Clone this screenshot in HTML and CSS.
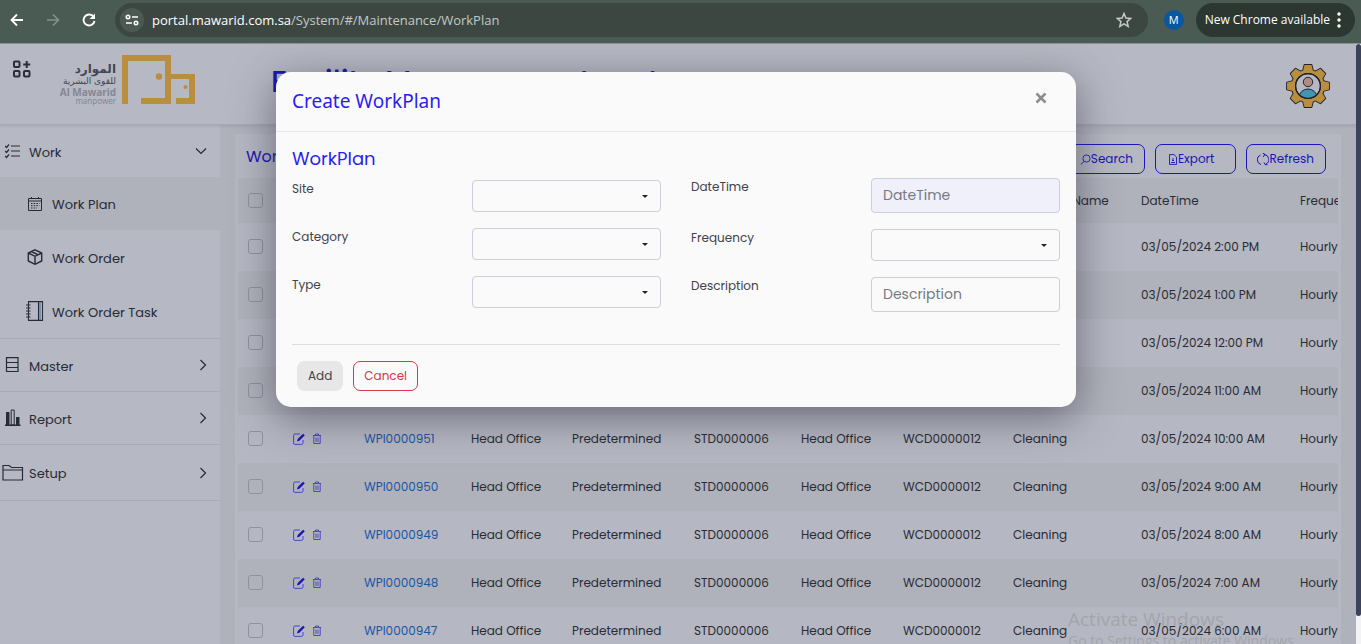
FILE: index.html
```html
<!DOCTYPE html>
<html lang="en">
<head>
<meta charset="utf-8">
<title>WorkPlan</title>
<link rel="stylesheet" href="styles.css">
</head>
<body>
<svg class="sprite" aria-hidden="true">
  <symbol id="edit" viewBox="0 0 12 12"><path d="M7 1H2Q.6 1 .6 2.400V10Q.6 11.400 2 11.400H8.500Q10 11.400 10 10V7" fill="none" stroke="currentColor"/><path d="M4 8.500 4.700 6 10 .7 11.800 2.300 6.400 7.700Z" fill="#1a15b8"/></symbol>
  <symbol id="trash" viewBox="0 0 12 12"><path d="M2 2.500H10M4.500 2.500V1H7.500V2.500M2.800 2.500V10.500H9.200V2.500M5 4.500V9M7 4.500V9" fill="none" stroke="currentColor"/></symbol>
  <symbol id="right" viewBox="0 0 12 12"><path d="M3.500 1 8.500 6 3.500 11" fill="none" stroke="currentColor" stroke-width="1.200"/></symbol>
</svg>

<div class="browser">
  <button class="nav" aria-label="Back"><svg width="14" height="14" viewBox="0 0 14 14"><path d="M13 7H2M7 1.500 1.500 7 7 12.500" fill="none" stroke="#fff" stroke-width="1.800"/></svg></button>
  <button class="nav" aria-label="Forward"><svg width="14" height="14" viewBox="0 0 14 14"><path d="M1 7H12M7 1.500 12.500 7 7 12.500" fill="none" stroke="#87918c" stroke-width="1.600"/></svg></button>
  <button class="nav" aria-label="Reload"><svg width="14" height="14" viewBox="0 0 14 14"><path d="M11.700 4A5.500 5.500 0 1 0 12.500 8" fill="none" stroke="#fff" stroke-width="1.900"/><path d="M13 .5V6H7.500Z" fill="#fff"/></svg></button>
  <div class="omnibox">
    <button class="site-info" aria-label="Site information"><svg width="14" height="12" viewBox="0 0 14 12"><g fill="none" stroke="#fff" stroke-width="1.600"><circle cx="3" cy="3" r="1.700"/><path d="M7 3H13M1 9H7"/><circle cx="11" cy="9" r="1.700"/></g></svg></button>
    <span class="url"><b>portal.mawarid.com.sa</b>/System/#/Maintenance/WorkPlan</span>
    <button class="star" aria-label="Bookmark"><svg width="16" height="16" viewBox="0 0 16 16"><path d="M8 1.500 9.900 6 14.800 6.400 11.100 9.600 12.200 14.400 8 11.800 3.800 14.400 4.900 9.600 1.200 6.400 6.100 6Z" fill="none" stroke="#c5cac7" stroke-width="1.500"/></svg></button>
  </div>
  <button class="profile">M</button>
  <button class="update"><span>New Chrome available</span><svg width="4" height="16" viewBox="0 0 4 16" fill="#fff"><circle cx="2" cy="2" r="1.700"/><circle cx="2" cy="8" r="1.700"/><circle cx="2" cy="14" r="1.700"/></svg></button>
</div>

<div class="viewport">
  <header class="header">
    <button class="apps" aria-label="Apps"><svg width="18" height="18" viewBox="0 0 18 18"><g fill="none" stroke="#2b2d39" stroke-width="2"><rect x="1" y="1.500" width="5.500" height="5.500" rx="1"/><rect x="1" y="11" width="5.500" height="5.500" rx="1"/><rect x="11" y="11" width="5.500" height="5.500" rx="1"/><path d="M13.700 1V8M10.200 4.500H17.200"/></g></svg></button>
    <div class="logo">
      <div class="logo-text">
        <span class="ar-big" lang="ar" dir="rtl">الموارد</span>
        <span class="ar-small" lang="ar" dir="rtl">للقوى البشرية</span>
        <span class="en-big">Al Mawarid</span>
        <span class="en-small">manpower</span>
      </div>
      <svg width="73" height="49" viewBox="0 0 73 49" fill="#b98e3e"><path d="M0 0H49V19H73V49H54V43H67V24H49V49H19V43H43V6H6V49H0Z"/><circle cx="37" cy="21.500" r="3.200"/><circle cx="63.500" cy="32" r="2"/></svg>
    </div>
    <h1>Facility Management system</h1>
    <button class="account" aria-label="Account"><svg width="44" height="44" viewBox="-22 -22 44 44">
      <defs><path id="tooth" d="M-5-15 -3.500-21H3.500L5-15Z"/><g id="teeth"><use href="#tooth"/><use href="#tooth" transform="rotate(45)"/><use href="#tooth" transform="rotate(90)"/><use href="#tooth" transform="rotate(135)"/><use href="#tooth" transform="rotate(180)"/><use href="#tooth" transform="rotate(225)"/><use href="#tooth" transform="rotate(270)"/><use href="#tooth" transform="rotate(315)"/><circle r="16.200"/></g><clipPath id="face"><circle r="12"/></clipPath></defs>
      <use href="#teeth" fill="#20222d" stroke="#20222d" stroke-width="1.800" stroke-linejoin="round"/><use href="#teeth" fill="#b98f3d"/>
      <circle r="12.400" fill="#b6b9c3" stroke="#20222d" stroke-width="1.200"/>
      <g clip-path="url(#face)"><ellipse cy="11.500" rx="9" ry="8.500" fill="#4395b4" stroke="#20222d"/></g><circle r="12.400" fill="none" stroke="#20222d" stroke-width="1.200"/>
      <circle cy="-4" r="4.700" fill="#b18c82" stroke="#20222d"/></svg></button>
  </header>

  <div class="layout">
    <nav class="sidebar">
      <a class="item top first" href="#"><svg width="16" height="16" viewBox="0 0 16 16"><path d="M6 3H15M6 8H15M6 13H15M0 3 1.500 4.500 4 1.500M0 8 1.500 9.500 4 6.500M0 13 1.500 14.500 4 11.500" fill="none" stroke="currentColor" stroke-width="1.200"/></svg><span>Work</span><svg class="chev down" width="12" height="12"><use href="#right"/></svg></a>
      <a class="item sub active" href="#"><svg width="16" height="16" viewBox="0 0 16 16"><g fill="none" stroke="currentColor"><path d="M1.500 2.500H14.500V14.500H1.500ZM1.500 5H14.500M4.500 1V3M11.500 1V3"/><path d="M4 7.500H12.500M4 9.700H12.500M4 12H10" stroke-dasharray="1.500 1.200"/></g></svg><span>Work Plan</span></a>
      <a class="item sub" href="#"><svg width="16" height="16" viewBox="0 0 16 16"><path d="M8 .8 14.700 4V12L8 15.300 1.300 12V4ZM1.300 4 8 7.300 14.700 4M8 7.300V15.300M4.500 2.500 11.200 5.800" fill="none" stroke="currentColor" stroke-width="1.400"/></svg><span>Work Order</span></a>
      <a class="item sub" href="#"><svg class="book" width="18" height="20" viewBox="0 0 18 20"><path d="M2.500.6H16.500V19.400H2.500ZM12.500.6V19.400M0 4H4.500M0 7H4.500M0 10H4.500M0 13H4.500M0 16H4.500" fill="none" stroke="currentColor" stroke-width="1.100"/><path d="M14 1V19" stroke="#3f6f9e"/></svg><span>Work Order Task</span></a>
      <a class="item top ruled" href="#"><svg width="16" height="16" viewBox="0 0 16 16"><path d="M1.500 .6H13V14.500H1.500ZM1.500 5.500H13M1.500 10.500H13" fill="none" stroke="currentColor" stroke-width="1.200"/></svg><span>Master</span><svg class="chev" width="12" height="12"><use href="#right"/></svg></a>
      <a class="item top ruled" href="#"><svg width="16" height="18" viewBox="0 0 16 18"><path d="M1 3H4.500V16H1ZM11 8H14.500V16H11ZM0 15.500H15.500V17H0Z" fill="currentColor"/><path d="M6.200 1H9.200V16H6.200Z" fill="none" stroke="currentColor"/></svg><span>Report</span><svg class="chev" width="12" height="12"><use href="#right"/></svg></a>
      <a class="item top ruled last" href="#"><svg class="folder" width="22" height="18" viewBox="0 0 22 18"><path d="M1 16V1.500H7L9.500 3.500H20.500V16ZM1 6H20.500" fill="none" stroke="currentColor" stroke-width="1.200"/></svg><span>Setup</span><svg class="chev" width="12" height="12"><use href="#right"/></svg></a>
    </nav>

    <main class="panel">
      <div class="toolbar">
        <h2>WorkPlan</h2>
        <button><svg width="11" height="11" viewBox="0 0 11 11"><g fill="none" stroke="currentColor" stroke-width=".9"><circle cx="6.500" cy="4.500" r="3.600"/><path d="M4 7.500 .8 10.500"/></g></svg>Search</button>
        <button class="export"><svg width="10" height="11" viewBox="0 0 10 11"><path d="M1.500.6H6L8.500 3V10.400H1.500ZM3 8.500H7M4 6.500H6M5 4V6" fill="none" stroke="currentColor" stroke-width=".9"/></svg>Export</button>
        <button><svg width="12" height="13" viewBox="0 0 12 13"><path d="M4 11.500A5 5 0 0 1 3.500 2M7 1.500A5 5 0 0 1 9 11M5.500 0 8 1.500 6 4M7 9.500 8 11.500 10.500 11.800" fill="none" stroke="currentColor"/></svg>Refresh</button>
      </div>
      <div class="table-wrap">
        <table>
          <colgroup><col class="c-check"><col class="c-act"><col class="c-id"><col class="c-site"><col class="c-type"><col class="c-code"><col class="c-loc"><col class="c-cat"><col class="c-name"><col class="c-date"><col class="c-freq"></colgroup>
          <thead><tr><th><input type="checkbox" aria-label="Select all"></th><th></th><th>WorkPlan</th><th>Site</th><th>Type</th><th>Site Code</th><th>Site Name</th><th>Category</th><th>Category Name</th><th>DateTime</th><th>Frequency</th></tr></thead>
          <tbody>
            <tr><td><input type="checkbox" aria-label="Select WPI0000955"></td><td class="act"><button aria-label="Edit"><svg><use href="#edit"/></svg></button><button aria-label="Delete"><svg><use href="#trash"/></svg></button></td><td><a href="#">WPI0000955</a></td><td>Head Office</td><td>Predetermined</td><td>STD0000006</td><td>Head Office</td><td>WCD0000012</td><td>Cleaning</td><td>03/05/2024 2:00 PM</td><td>Hourly</td></tr>
            <tr><td><input type="checkbox" aria-label="Select WPI0000954"></td><td class="act"><button aria-label="Edit"><svg><use href="#edit"/></svg></button><button aria-label="Delete"><svg><use href="#trash"/></svg></button></td><td><a href="#">WPI0000954</a></td><td>Head Office</td><td>Predetermined</td><td>STD0000006</td><td>Head Office</td><td>WCD0000012</td><td>Cleaning</td><td>03/05/2024 1:00 PM</td><td>Hourly</td></tr>
            <tr><td><input type="checkbox" aria-label="Select WPI0000953"></td><td class="act"><button aria-label="Edit"><svg><use href="#edit"/></svg></button><button aria-label="Delete"><svg><use href="#trash"/></svg></button></td><td><a href="#">WPI0000953</a></td><td>Head Office</td><td>Predetermined</td><td>STD0000006</td><td>Head Office</td><td>WCD0000012</td><td>Cleaning</td><td>03/05/2024 12:00 PM</td><td>Hourly</td></tr>
            <tr><td><input type="checkbox" aria-label="Select WPI0000952"></td><td class="act"><button aria-label="Edit"><svg><use href="#edit"/></svg></button><button aria-label="Delete"><svg><use href="#trash"/></svg></button></td><td><a href="#">WPI0000952</a></td><td>Head Office</td><td>Predetermined</td><td>STD0000006</td><td>Head Office</td><td>WCD0000012</td><td>Cleaning</td><td>03/05/2024 11:00 AM</td><td>Hourly</td></tr>
            <tr><td><input type="checkbox" aria-label="Select WPI0000951"></td><td class="act"><button aria-label="Edit"><svg><use href="#edit"/></svg></button><button aria-label="Delete"><svg><use href="#trash"/></svg></button></td><td><a href="#">WPI0000951</a></td><td>Head Office</td><td>Predetermined</td><td>STD0000006</td><td>Head Office</td><td>WCD0000012</td><td>Cleaning</td><td>03/05/2024 10:00 AM</td><td>Hourly</td></tr>
            <tr><td><input type="checkbox" aria-label="Select WPI0000950"></td><td class="act"><button aria-label="Edit"><svg><use href="#edit"/></svg></button><button aria-label="Delete"><svg><use href="#trash"/></svg></button></td><td><a href="#">WPI0000950</a></td><td>Head Office</td><td>Predetermined</td><td>STD0000006</td><td>Head Office</td><td>WCD0000012</td><td>Cleaning</td><td>03/05/2024 9:00 AM</td><td>Hourly</td></tr>
            <tr><td><input type="checkbox" aria-label="Select WPI0000949"></td><td class="act"><button aria-label="Edit"><svg><use href="#edit"/></svg></button><button aria-label="Delete"><svg><use href="#trash"/></svg></button></td><td><a href="#">WPI0000949</a></td><td>Head Office</td><td>Predetermined</td><td>STD0000006</td><td>Head Office</td><td>WCD0000012</td><td>Cleaning</td><td>03/05/2024 8:00 AM</td><td>Hourly</td></tr>
            <tr><td><input type="checkbox" aria-label="Select WPI0000948"></td><td class="act"><button aria-label="Edit"><svg><use href="#edit"/></svg></button><button aria-label="Delete"><svg><use href="#trash"/></svg></button></td><td><a href="#">WPI0000948</a></td><td>Head Office</td><td>Predetermined</td><td>STD0000006</td><td>Head Office</td><td>WCD0000012</td><td>Cleaning</td><td>03/05/2024 7:00 AM</td><td>Hourly</td></tr>
            <tr><td><input type="checkbox" aria-label="Select WPI0000947"></td><td class="act"><button aria-label="Edit"><svg><use href="#edit"/></svg></button><button aria-label="Delete"><svg><use href="#trash"/></svg></button></td><td><a href="#">WPI0000947</a></td><td>Head Office</td><td>Predetermined</td><td>STD0000006</td><td>Head Office</td><td>WCD0000012</td><td>Cleaning</td><td>03/05/2024 6:00 AM</td><td>Hourly</td></tr>
          </tbody>
        </table>
      </div>
    </main>
  </div>

  <div class="scrollbar"><div class="thumb"></div></div>

  <div class="overlay">
    <section class="modal" role="dialog" aria-labelledby="modal-title">
      <div class="modal-head">
        <h2 id="modal-title">Create WorkPlan</h2>
        <button class="close" aria-label="Close"><svg width="12" height="12" viewBox="0 0 12 12"><path d="M1.500 1.500 10.500 10.500M10.500 1.500 1.500 10.500" stroke="#8c8c8c" stroke-width="2.500"/></svg></button>
      </div>
      <form class="modal-body">
        <h3>WorkPlan</h3>
        <div class="fields">
          <div class="column first">
            <div class="field"><label for="site">Site</label><div class="select"><select id="site"><option></option></select></div></div>
            <div class="field"><label for="category">Category</label><div class="select"><select id="category"><option></option></select></div></div>
            <div class="field"><label for="type">Type</label><div class="select"><select id="type"><option></option></select></div></div>
          </div>
          <div class="column">
            <div class="field"><label for="datetime">DateTime</label><input class="readonly" id="datetime" type="text" placeholder="DateTime" readonly></div>
            <div class="field"><label for="frequency">Frequency</label><div class="select"><select id="frequency"><option></option></select></div></div>
            <div class="field"><label for="description">Description</label><input id="description" type="text" placeholder="Description"></div>
          </div>
        </div>
        <div class="actions"><button type="button" class="add">Add</button><button type="button" class="cancel">Cancel</button></div>
      </form>
    </section>
  </div>

  <div class="watermark"><div class="wm-title">Activate Windows</div><div class="wm-text">Go to Settings to activate Windows.</div></div>
</div>
</body>
</html>
```
FILE: styles.css
```css
* { box-sizing: border-box; }
body {
  margin: 0;
  height: 100vh;
  display: flex;
  flex-direction: column;
  overflow: hidden;
  font: 12px/18px Poppins, Inter, sans-serif;
  color: #2a2b34;
}
button { font: inherit; color: inherit; background: none; border: 0; padding: 0; cursor: pointer; }
h1, h2, h3 { margin: 0; font-weight: 400; }
a { text-decoration: none; }
svg { display: block; flex: none; }
.sprite { position: absolute; width: 0; height: 0; }

/* browser bar */
.browser {
  flex: none;
  display: flex;
  align-items: center;
  height: 43px;
  padding: 0 6px 3px 10px;
  background: #4a5b53;
  font-family: "Segoe UI", "Open Sans", sans-serif;
}
.nav { width: 14px; margin-right: 22px; }
.nav:nth-child(3) { margin-right: 19px; }
.omnibox {
  flex: 1;
  display: flex;
  align-items: center;
  height: 34px;
  padding: 0 16px 0 5px;
  border-radius: 17px;
  background: #3c4742;
  margin-right: 16px;
}
.site-info { display: grid; place-items: center; width: 24px; height: 24px; border-radius: 50%; background: #4a5a53; margin-right: 8px; }
.url { flex: 1; color: #c3c9c6; font-size: 13px; }
.url b { font-weight: 400; color: #fff; }
.profile { width: 20px; height: 20px; border-radius: 50%; background: #0957a0; color: #fff; font-size: 11px; line-height: 20px; margin-right: 12px; }
.update { display: flex; align-items: center; gap: 7px; height: 34px; padding: 0 14px 0 9px; border-radius: 17px; background: #2c3732; color: #fff; font-size: 12px; }

/* page */
.viewport { position: relative; flex: 1; display: flex; flex-direction: column; min-height: 0; overflow: hidden; background: #afb2bb; border-top: 1px solid #87938e; }
.header {
  position: relative;
  flex: none;
  display: flex;
  align-items: flex-start;
  height: 81px;
  padding: 0 31px 0 13px;
  background: #b6b9c3;
  border-bottom: 1px solid #a6a8b3;
  box-shadow: 0 1px 3px rgba(60, 62, 80, .15);
}
.apps { margin: 16px 29px 0 0; }
.logo { display: flex; align-items: flex-start; gap: 6px; margin: 11px 76px 0 0; }
.logo-text { display: flex; flex-direction: column; align-items: flex-end; width: 56px; padding-top: 7px; white-space: nowrap; color: #444653; }
.ar-big { font: bold 12px/14px "DejaVu Sans", sans-serif; }
.ar-small { font: 9px/11px "DejaVu Sans", sans-serif; }
.en-big { font: bold 10px/10px "Noto Sans", sans-serif; color: #858793; }
.en-small { font: 8px/8px "Noto Sans", sans-serif; color: #858793; }
.header h1 { flex: 1; padding-top: 20px; font-size: 30px; line-height: 36px; font-weight: 500; color: #1a16b4; white-space: nowrap; }
.account { margin-top: 20px; }
.layout { flex: 1; display: flex; min-height: 0; }
.sidebar { flex: none; width: 220px; background: #b6b9c3; }
.item { display: flex; align-items: center; height: 53px; color: #282a35; font-size: 13px; padding: 0 13px 0 5px; }
.item span { flex: 1; margin-left: 8px; padding-top: 3px; }
.item.first { height: 52px; }
.item.sub { height: 54px; padding-left: 27px; }
.item.sub span { margin-left: 9px; }
.item.active { height: 53px; background: #afb2bb; }
.item .book { margin: 0 -1px; }
.ruled { border-top: 1px solid #a9acb5; }
.item.last { height: 57px; border-bottom: 1px solid #a9acb5; }
.item .folder { margin: 0 -3px; }
.item.ruled { padding: 0 11px 0 5px; }
.down { transform: rotate(90deg); }

.panel { flex: 1; min-width: 0; margin: 9px 20px 0 15px; padding: 0 3px; background: #b5b8c2; }
.toolbar { display: flex; align-items: center; gap: 10px; height: 44px; padding: 6px 12px 0 8px; }
.toolbar h2 { flex: 1; padding-bottom: 4px; font-size: 16px; color: #1a16b4; }
.toolbar button { display: flex; align-items: center; height: 30px; padding: 0 11px 0 10px; border: 1px solid #1c17bc; border-radius: 7px; color: #1a16b4; }
.toolbar .export { padding: 0 21px 0 12px; }
.table-wrap { overflow: hidden; }
table { width: 1162px; table-layout: fixed; border-collapse: collapse; }
th, td { padding: 0 10px; text-align: left; font-weight: 400; white-space: nowrap; }
th { height: 45px; background: #afb2bb; }
td { height: 48px; }
tbody tr:nth-child(even) { background: #afb2bb; }
td a { color: #1657a8; }
.c-check { width: 45px; } .c-act { width: 71px; } .c-id { width: 107px; } .c-site { width: 101px; }
.c-type { width: 122px; } .c-code { width: 107px; } .c-loc { width: 102px; } .c-cat { width: 110px; }
.c-name { width: 128px; } .c-date { width: 159px; } .c-freq { width: 110px; }
input[type="checkbox"] { appearance: none; display: block; width: 15px; height: 15px; margin: 0; border: 1px solid #8f919b; border-radius: 3px; }
td input[type="checkbox"] { margin-bottom: 2px; }
.act { padding-bottom: 2px; }
.act button { display: inline-block; vertical-align: middle; margin-right: 6px; color: #4a46c4; }
.act svg { width: 12px; height: 12px; }

.scrollbar { position: absolute; top: 0; right: 0; bottom: 0; width: 5px; background: #f3f3f5; }
.thumb { height: calc(100% - 28px); border-radius: 3px; background: #3c425a; }

/* dialog */
.overlay { position: absolute; inset: 0 9px 0 0; display: flex; justify-content: center; align-items: flex-start; padding-top: 28px; }
.modal { width: 800px; border-radius: 15px; background: #fafafa; color: #40424a; box-shadow: 0 10px 40px 2px rgba(45, 42, 60, .5); }
.modal-head { display: flex; justify-content: space-between; align-items: center; height: 60px; padding: 0 29px 2px 16px; border-bottom: 1px solid #e6e7ea; }
.modal-head h2 { font-family: "Noto Sans", sans-serif; font-size: 19px; line-height: 24px; color: #2a1fee; }
.close { padding-bottom: 6px; }
.modal-body { padding: 14px 16px 16px; }
.modal-body h3 { font-size: 18px; line-height: 26px; color: #2a1fee; }
.fields { display: grid; grid-template-columns: 1fr 1fr; gap: 30px; padding: 6px 0 32px; border-bottom: 1px solid #dddee1; }
.column { display: flex; flex-direction: column; gap: 16px; }
.column.first { padding-top: 2px; }
.field { display: grid; grid-template-columns: 180px 1fr; align-items: start; }
.select { position: relative; }
.select::after { content: ""; position: absolute; right: 13px; top: 15px; border: 3px solid transparent; border-top-color: #222; pointer-events: none; }
select, input[type="text"] { display: block; width: 100%; height: 32px; border: 1px solid #ccced9; border-radius: 4px; background: #fafafa; appearance: none; font: inherit; font-size: 14px; padding: 0 11px; }
input[type="text"] { height: 35px; }
input.readonly { background: #f0f0fa; }
::placeholder { color: #747a82; opacity: 1; }
.actions { display: flex; gap: 10px; padding: 16px 5px 0; }
.actions button { height: 30px; padding: 0 10px; border: 1px solid #e7e7e7; border-radius: 7px; background: #e7e7e7; }
.actions .cancel { border-color: #dc3545; background: none; color: #dc3545; }

.watermark { position: absolute; right: 61px; bottom: -7px; width: 232px; color: #a3a5ab; font-family: "Segoe UI", "Open Sans", sans-serif; white-space: nowrap; pointer-events: none; }
.wm-title { font-size: 19px; line-height: 24px; }
.wm-text { font-size: 14px; line-height: 20px; }
```
